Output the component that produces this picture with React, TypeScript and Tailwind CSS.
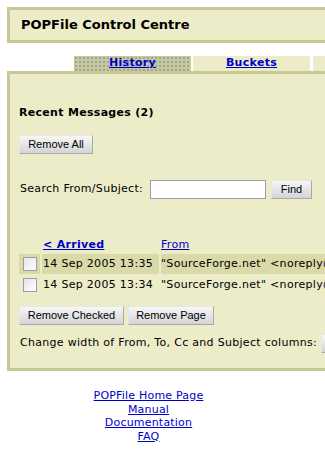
import React from "react";

const btn =
  "h-[19px] whitespace-nowrap border border-[#a9a9a9] border-t-[#e6e6e6] border-l-[#e6e6e6] bg-gradient-to-b from-[#f7f7f7] to-[#d4d4d8] px-0 font-['Liberation_Sans',Arial,sans-serif] text-[11px] leading-none tracking-normal text-black";

const dots =
  "bg-[radial-gradient(#9da0b4_0.7px,transparent_0.9px)] bg-[length:4px_4px]";

function Row({ date, shaded }: { date: string; shaded?: boolean }) {
  const cell = shaded ? "bg-[#dadaa9]" : "";
  return (
    <div className="flex h-[20px] gap-[2px]">
      <div className={`flex w-[21px] items-center justify-center ${cell}`}>
        <span className="h-[14px] w-[14px] border border-[#9b9ca8] bg-gradient-to-br from-[#e4e4ea] to-white" />
      </div>
      <div className={`flex w-[117px] items-center pl-[1px] ${cell}`}>{date}</div>
      <div className={`flex w-[260px] items-center whitespace-nowrap ${cell}`}>
        "SourceForge.net" &lt;noreply@sourceforge.net&gt;
      </div>
    </div>
  );
}

export default function App() {
  return (
    <div className="h-[450px] w-[325px] overflow-hidden bg-white font-['DejaVu_Sans',Verdana,sans-serif] text-[11px] tracking-[0.3px] text-black">
      <div className="w-[430px] pl-[7px] pt-[7px]">
        <div className="flex h-[36px] items-center border-y-[3px] border-l-[3px] border-[#c8c995] bg-[#ececc8] pl-[11px] text-[13px] font-bold tracking-normal">
          POPFile Control Centre
        </div>

        <div className="mt-[13px] flex h-[15px] pl-[67px] text-[11px] font-bold">
          <div className={`flex w-[118px] items-center justify-center bg-[#c8c995] ${dots}`}>
            <a href="#" className="text-[#0000cc] underline">History</a>
          </div>
          <div className="ml-[2px] flex w-[118px] items-center justify-center bg-[#ececc8]">
            <a href="#" className="text-[#0000cc] underline">Buckets</a>
          </div>
          <div className="ml-[3px] w-[118px] bg-[#ececc8]" />
        </div>

        <div className="h-[300px] border-y-[3px] border-l-[3px] border-[#c8c995] bg-[#ececc8] pl-[9px]">
          <div className="mt-[32px] h-[14px] font-bold leading-[14px]">Recent Messages (2)</div>
          <button className={`mt-[15px] w-[74px] ${btn}`}>Remove All</button>

          <div className="mt-[26px] flex h-[19px] items-center">
            <span className="w-[131px] pl-[1px]">Search From/Subject:</span>
            <input className="h-[19px] w-[116px] border border-[#9b9ca8] bg-white" />
            <button className={`ml-[5px] w-[41px] ${btn}`}>Find</button>
          </div>

          <div className="mt-[39px] flex h-[14px] items-center gap-[2px] leading-[14px]">
            <div className="w-[21px]" />
            <div className="w-[117px] pl-[1px]">
              <a href="#" className="font-bold text-[#0000cc] underline">&lt; Arrived </a>
            </div>
            <a href="#" className="text-[#0000cc] underline">From </a>
          </div>

          <div className="mt-[2px] flex flex-col gap-[1px]">
            <Row date="14 Sep 2005 13:35" shaded />
            <Row date="14 Sep 2005 13:34" />
          </div>

          <div className="mt-[11px] flex gap-[4px]">
            <button className={`w-[105px] ${btn}`}>Remove Checked</button>
            <button className={`w-[86px] ${btn}`}>Remove Page</button>
          </div>

          <div className="mt-[11px] flex h-[14px] items-center whitespace-nowrap">
            <span className="pl-[1px]">Change width of From, To, Cc and Subject columns:</span>
            <button className={`ml-[4px] w-[20px] ${btn}`}>-</button>
          </div>
        </div>

        <div className="mt-[18px] flex w-[283px] flex-col items-center leading-[13.5px] tracking-[0.2px]">
          <a href="#" className="text-[#0000cc] underline">POPFile Home Page</a>
          <a href="#" className="text-[#0000cc] underline">Manual</a>
          <a href="#" className="text-[#0000cc] underline">Documentation</a>
          <a href="#" className="text-[#0000cc] underline">FAQ</a>
        </div>
      </div>
    </div>
  );
}
